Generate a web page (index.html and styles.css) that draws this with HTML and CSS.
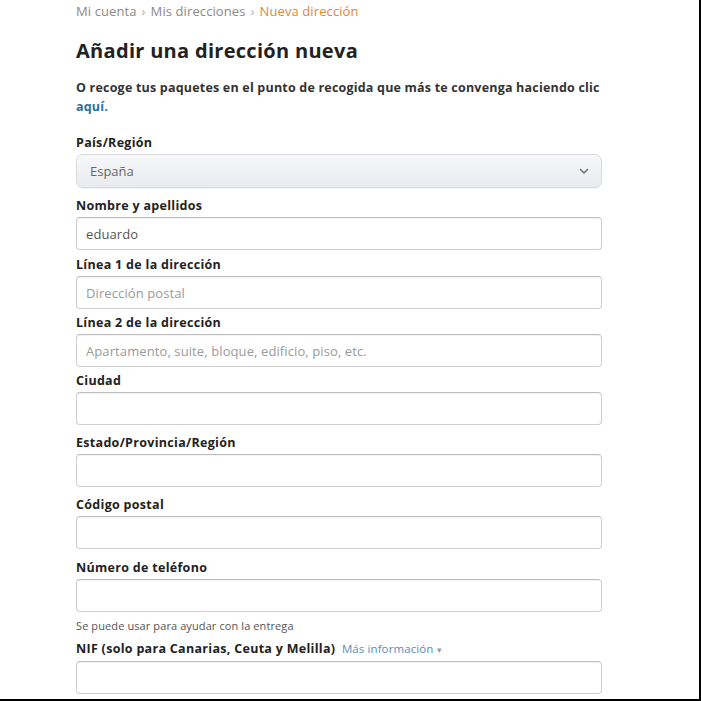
FILE: index.html
```html
<!DOCTYPE html>
<html lang="es">
<head>
<meta charset="utf-8">
<title>Añadir una dirección nueva</title>
<link rel="stylesheet" href="styles.css">
</head>
<body>
<div class="frame">
  <main class="page">
    <nav class="crumbs">
      <span class="crumb">Mi cuenta</span>
      <span class="sep">›</span>
      <span class="crumb">Mis direcciones</span>
      <span class="sep">›</span>
      <span class="crumb current">Nueva dirección</span>
    </nav>
    <h1 class="title">Añadir una dirección nueva</h1>
    <p class="intro">O recoge tus paquetes en el punto de recogida que más te convenga haciendo clic <a class="link" href="#">aquí.</a></p>

    <form class="form">
      <div class="field field-select">
        <label class="label">País/Región</label>
        <div class="select">
          <span class="select-value">España</span>
          <svg class="chev" width="10" height="7" viewBox="0 0 10 7"><path d="M1.5 1.5 L5 5 L8.5 1.5" fill="none" stroke="#777" stroke-width="1.7" stroke-linecap="round" stroke-linejoin="round"/></svg>
        </div>
      </div>
      <div class="field">
        <label class="label">Nombre y apellidos</label>
        <div class="input"><span class="value">eduardo</span></div>
      </div>
      <div class="field field-tight">
        <label class="label">Línea 1 de la dirección</label>
        <div class="input"><span class="placeholder">Dirección postal</span></div>
      </div>
      <div class="field field-tight">
        <label class="label">Línea 2 de la dirección</label>
        <div class="input"><span class="placeholder">Apartamento, suite, bloque, edificio, piso, etc.</span></div>
      </div>
      <div class="field field-wide">
        <label class="label">Ciudad</label>
        <div class="input"></div>
      </div>
      <div class="field field-wide">
        <label class="label">Estado/Provincia/Región</label>
        <div class="input"></div>
      </div>
      <div class="field field-wider">
        <label class="label">Código postal</label>
        <div class="input"></div>
      </div>
      <div class="field field-help">
        <label class="label">Número de teléfono</label>
        <div class="input"></div>
        <p class="help">Se puede usar para ayudar con la entrega</p>
      </div>
      <div class="field">
        <label class="label">NIF (solo para Canarias, Ceuta y Melilla) <a class="more" href="#">Más información <span class="caret">▾</span></a></label>
        <div class="input"></div>
      </div>
    </form>
  </main>
</div>
</body>
</html>
```

FILE: styles.css
```css
* { box-sizing: border-box; }
html, body { margin: 0; padding: 0; background: #fff; }
body {
  font-family: "Open Sans", "Liberation Sans", Arial, sans-serif;
  color: #111;
}
.frame {
  width: 701px;
  height: 701px;
  border-right: 2px solid #000;
  border-bottom: 2px solid #000;
  overflow: hidden;
  background: #fff;
}
.page {
  padding-left: 76px;
  width: 611px;
}
.crumbs {
  padding-top: 3px;
  height: 19px;
  font-size: 13px;
  letter-spacing: 0.1px;
  line-height: 16px;
  color: #8a8a8a;
  display: flex;
  gap: 5px;
}
.sep { color: #aaa; }
.current { color: #d9893c; }
.title {
  margin: 19px 0 0;
  font-size: 20px;
  letter-spacing: 0.3px;
  line-height: 26px;
  font-weight: 700;
  color: #222;
}
.intro {
  margin: 14px 0 0;
  width: 532px;
  font-size: 12.5px;
  letter-spacing: 0.2px;
  line-height: 19px;
  font-weight: 700;
  color: #333;
}
.link { color: #2d6f9e; text-decoration: none; }
.form { margin-top: 18px; width: 526px; }
.field { margin-bottom: 6px; }
.field-select { margin-bottom: 9px; }
.field-tight { margin-bottom: 5px; }
.field-wide { margin-bottom: 9px; }
.field-wider { margin-bottom: 10px; }
.label {
  display: block;
  font-size: 12.5px;
  letter-spacing: 0.3px;
  line-height: 17px;
  font-weight: 700;
  color: #222;
  margin-bottom: 3px;
  white-space: nowrap;
}
.select {
  height: 34px;
  border: 1px solid #d8dadd;
  border-radius: 7px;
  background: linear-gradient(#f7f8fa, #e9ebee);
  box-shadow: 0 1px 1px rgba(0,0,0,0.06);
  display: flex;
  align-items: center;
  justify-content: space-between;
  padding: 0 12px 0 13px;
}
.select-value { font-size: 13px; color: #666; }
.chev { display: block; }
.input {
  height: 33px;
  border: 1px solid #cfcfcf;
  border-top-color: #bdbdbd;
  border-radius: 4px;
  box-shadow: inset 0 1px 1px rgba(0,0,0,0.05);
  display: flex;
  align-items: center;
  padding: 0 9px;
  font-size: 13px;
  letter-spacing: 0.1px;
}
.value { color: #555; }
.placeholder { color: #9a9a9a; }
.help {
  margin: 7px 0 0;
  font-size: 11px;
  letter-spacing: 0.1px;
  line-height: 14px;
  color: #555;
}
.field-help { margin-bottom: 7px; }
.more {
  font-weight: 400;
  font-size: 11.5px;
  letter-spacing: 0.1px;
  color: #5b8cb8;
  text-decoration: none;
  margin-left: 3px;
}
.caret { color: #999; font-size: 9px; }
```
